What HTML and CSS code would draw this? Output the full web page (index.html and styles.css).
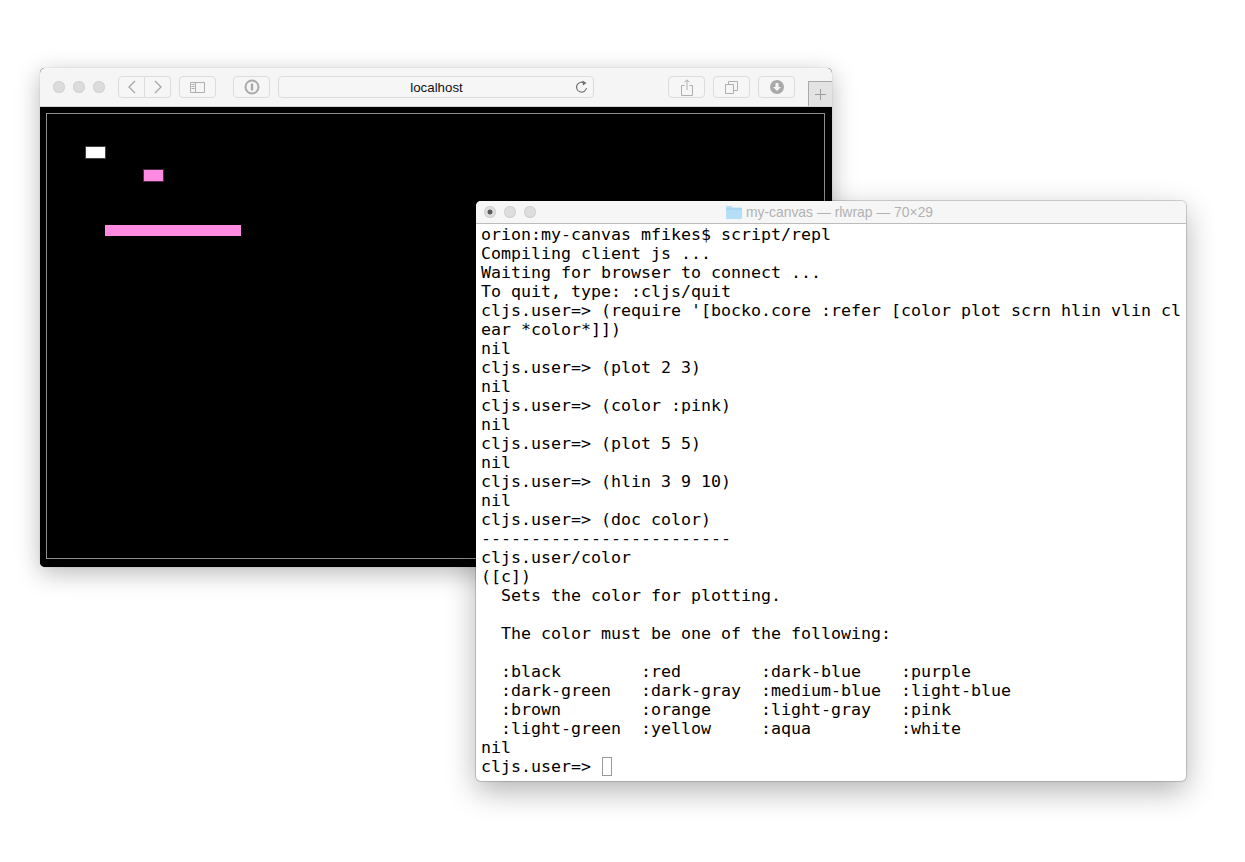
FILE: index.html
```html
<!DOCTYPE html>
<html lang="en">
<head>
<meta charset="utf-8">
<title>my-canvas</title>
<link rel="stylesheet" href="styles.css">
</head>
<body>
<main class="desktop">
  <section class="browser">
    <header class="toolbar">
      <div class="lights">
        <span class="light"></span><span class="light"></span><span class="light"></span>
      </div>
      <div class="nav">
        <button class="btn nav-btn nav-back"><svg width="12" height="16" viewBox="0 0 12 16"><path d="M9 2 3 8l6 6" class="ic"/></svg></button>
        <button class="btn nav-btn nav-fwd"><svg width="12" height="16" viewBox="0 0 12 16"><path d="M3 2l6 6-6 6" class="ic"/></svg></button>
      </div>
      <button class="btn btn-side"><svg width="15" height="11" viewBox="0 0 15 11"><path d="M.5.5h14v10H.5zM5.5.5v10" class="ic-thin"/><path d="M1.5 2.5h3M1.5 4.5h3M1.5 6.5h3" class="ic-thin"/></svg></button>
      <button class="btn btn-pw"><svg width="16" height="16" viewBox="0 0 16 16"><circle cx="8" cy="8" r="6.500" class="ic-bold"/><path d="M8 4.500v7" class="ic-bar"/></svg></button>
      <div class="address"><span class="address-text">localhost</span>
        <svg class="reload" width="13" height="14" viewBox="0 0 13 14"><path d="M9.800 3.300A5 5 0 1 0 11.500 8" class="ic-dark"/><path d="M7.500 0.500l4 2.600-3.600 2.400z" class="ic-fill"/></svg>
      </div>
      <div class="right-tools">
        <button class="btn btn-share"><svg width="12" height="17" viewBox="0 0 12 17"><path d="M3.500 6.500H.5v10h11v-10h-3M6 11V1M3.500 3.300 6 .8l2.500 2.500" class="ic-thin"/></svg></button>
        <button class="btn btn-tabs"><svg width="13" height="13" viewBox="0 0 13 13"><path d="M.5 3.500h8v9h-8zM3.500 3.500v-3h9v9h-4" class="ic-thin"/></svg></button>
        <button class="btn btn-dl"><svg width="14" height="14" viewBox="0 0 14 14"><circle cx="7" cy="7" r="7" fill="#a9a9a9"/><path d="M5.500 3h3v4H11l-4 4-4-4h2.500z" fill="#f5f5f5"/></svg></button>
      </div>
      <div class="newtab"><svg width="13" height="13" viewBox="0 0 13 13"><path d="M6.500 1v11M1 6.500h11" class="ic-plus"/></svg></div>
    </header>
    <div class="page">
      <div class="canvas">
        <div class="px px-white"></div>
        <div class="px px-pink1"></div>
        <div class="px px-pink2"></div>
      </div>
    </div>
  </section>

  <section class="terminal">
    <header class="titlebar">
      <div class="term-lights">
        <span class="tlight tlight-close"></span><span class="tlight"></span><span class="tlight"></span>
      </div>
      <div class="term-title">
        <svg width="16" height="13" viewBox="0 0 16 13"><path d="M0 1a1 1 0 0 1 1-1h4.500l1.500 1.500h8a1 1 0 0 1 1 1V12a1 1 0 0 1-1 1H1a1 1 0 0 1-1-1z" fill="#b5dff6"/><path d="M0 3h16" stroke="#98cdec" stroke-width="1"/></svg>
        <span>my-canvas — rlwrap — 70×29</span>
      </div>
    </header>
<pre class="term-body">orion:my-canvas mfikes$ script/repl
Compiling client js ...
Waiting for browser to connect ...
To quit, type: :cljs/quit
cljs.user=&gt; (require '[bocko.core :refer [color plot scrn hlin vlin cl
ear *color*]])
nil
cljs.user=&gt; (plot 2 3)
nil
cljs.user=&gt; (color :pink)
nil
cljs.user=&gt; (plot 5 5)
nil
cljs.user=&gt; (hlin 3 9 10)
nil
cljs.user=&gt; (doc color)
-------------------------
cljs.user/color
([c])
  Sets the color for plotting.

  The color must be one of the following:

  :black        :red        :dark-blue    :purple
  :dark-green   :dark-gray  :medium-blue  :light-blue
  :brown        :orange     :light-gray   :pink
  :light-green  :yellow     :aqua         :white
nil
cljs.user=&gt; <span class="cursor"></span></pre>
  </section>
</main>
</body>
</html>
```
FILE: styles.css
```css
html, body {
  margin: 0;
  padding: 0;
  background: #fff;
}

.desktop {
  position: relative;
  width: 1245px;
  height: 862px;
  overflow: hidden;
}

/* Browser window */
.browser {
  position: absolute;
  left: 40px;
  top: 68px;
  width: 792px;
  height: 499px;
  display: flex;
  flex-direction: column;
  border-radius: 5px;
  overflow: hidden;
  box-shadow: 0 6px 24px rgba(0, 0, 0, 0.28), 0 0 1px rgba(0, 0, 0, 0.35);
  background: #000;
}

.toolbar {
  position: relative;
  flex: 0 0 39px;
  box-sizing: border-box;
  display: flex;
  align-items: flex-start;
  padding: 8px 0 0 13px;
  background: #f5f5f5;
  border-bottom: 1px solid #d4d4d4;
}

.lights {
  display: flex;
  gap: 8px;
  margin-top: 5px;
  margin-right: 13px;
}

.light {
  width: 12px;
  height: 12px;
  border-radius: 50%;
  background: #dcdcdc;
  box-shadow: inset 0 0 0 1px #d2d2d2;
}

.btn {
  box-sizing: border-box;
  height: 22px;
  padding: 0;
  display: flex;
  align-items: center;
  justify-content: center;
  background: #f6f6f6;
  border: 1px solid #dcdcdc;
  border-radius: 4px;
}

.nav {
  display: flex;
  margin-right: 8px;
}

.nav-btn {
  width: 27px;
}

.nav-back {
  border-radius: 4px 0 0 4px;
}

.nav-fwd {
  width: 26px;
  border-left: 0;
  border-radius: 0 4px 4px 0;
}

.btn-side {
  width: 37px;
  margin-right: 17px;
}

.btn-pw {
  width: 37px;
  margin-right: 8px;
}

.address {
  box-sizing: border-box;
  position: relative;
  width: 316px;
  height: 22px;
  display: flex;
  align-items: center;
  justify-content: center;
  background: #f6f6f6;
  border: 1px solid #dcdcdc;
  border-radius: 4px;
}

.address-text {
  font: 13.3px "Liberation Sans", Arial, sans-serif;
  color: #111;
  margin-left: 1px;
}

.reload {
  position: absolute;
  right: 5px;
  top: 3px;
}

.right-tools {
  display: flex;
  gap: 8px;
  margin-left: 74px;
}

.right-tools .btn {
  width: 37px;
}

.newtab {
  position: absolute;
  right: 0;
  bottom: 0;
  box-sizing: border-box;
  width: 24px;
  height: 25px;
  display: flex;
  align-items: center;
  justify-content: center;
  background: #e3e3e3;
  border-top: 1px solid #a8a8a8;
  border-left: 1px solid #a8a8a8;
}

.ic {
  fill: none;
  stroke: #a6a6a6;
  stroke-width: 1.3;
}

.ic-thin {
  fill: none;
  stroke: #aeaeae;
  stroke-width: 1;
}

.ic-plus {
  fill: none;
  stroke: #9c9c9c;
  stroke-width: 1;
}

.ic-bold {
  fill: none;
  stroke: #a9a9a9;
  stroke-width: 2;
}

.ic-bar {
  fill: none;
  stroke: #a9a9a9;
  stroke-width: 2.4;
}

.ic-dark {
  fill: none;
  stroke: #6e6e6e;
  stroke-width: 1.1;
}

.ic-fill {
  fill: #6e6e6e;
}

.page {
  flex: 1;
  display: flex;
  padding: 6px 7px 8px 6px;
  background: #000;
}

.canvas {
  position: relative;
  flex: 1;
  box-sizing: border-box;
  border: 1px solid #8f8f8f;
}

.px {
  position: absolute;
}

.px-white {
  left: 39px;
  top: 33px;
  width: 19px;
  height: 11px;
  background: #fff;
  box-shadow: 0 0 0 1px rgba(255, 255, 255, 0.25);
}

.px-pink1 {
  left: 97px;
  top: 56px;
  width: 19px;
  height: 11px;
  background: #ff8ae2;
  box-shadow: 0 0 0 1px rgba(255, 138, 226, 0.3);
}

.px-pink2 {
  left: 58px;
  top: 111px;
  width: 136px;
  height: 11px;
  background: #ff8ae2;
}

/* Terminal window */
.terminal {
  position: absolute;
  left: 476px;
  top: 201px;
  width: 710px;
  height: 580px;
  display: flex;
  flex-direction: column;
  border-radius: 5px;
  overflow: hidden;
  background: #fff;
  box-shadow: 0 10px 30px rgba(0, 0, 0, 0.3), 0 0 0 1px rgba(0, 0, 0, 0.16);
}

.titlebar {
  position: relative;
  flex: 0 0 23px;
  box-sizing: border-box;
  display: flex;
  align-items: center;
  justify-content: center;
  background: #f6f6f6;
  border-bottom: 1px solid #bcbcbc;
}

.term-lights {
  position: absolute;
  left: 8px;
  top: 5px;
  display: flex;
  gap: 8px;
}

.tlight {
  width: 12px;
  height: 12px;
  border-radius: 50%;
  background: #dddddd;
  box-shadow: inset 0 0 0 1px #d0d0d0;
}

.tlight-close {
  background: radial-gradient(circle, #5c5c5c 0 2.2px, #dddddd 2.8px);
}

.term-title {
  display: flex;
  align-items: center;
  gap: 4px;
  margin-right: 3px;
  font: 13.9px "Liberation Sans", Arial, sans-serif;
  color: #b2b2b2;
}

.term-body {
  margin: 0;
  padding: 1px 5px 0;
  font-family: "DejaVu Sans Mono", monospace;
  font-size: 16.62px;
  line-height: 19px;
  color: #000;
  white-space: pre;
}

.cursor {
  display: inline-block;
  box-sizing: border-box;
  width: 10px;
  height: 19px;
  margin-left: 1px;
  vertical-align: top;
  border: 1px solid #9a9a9a;
}
```
